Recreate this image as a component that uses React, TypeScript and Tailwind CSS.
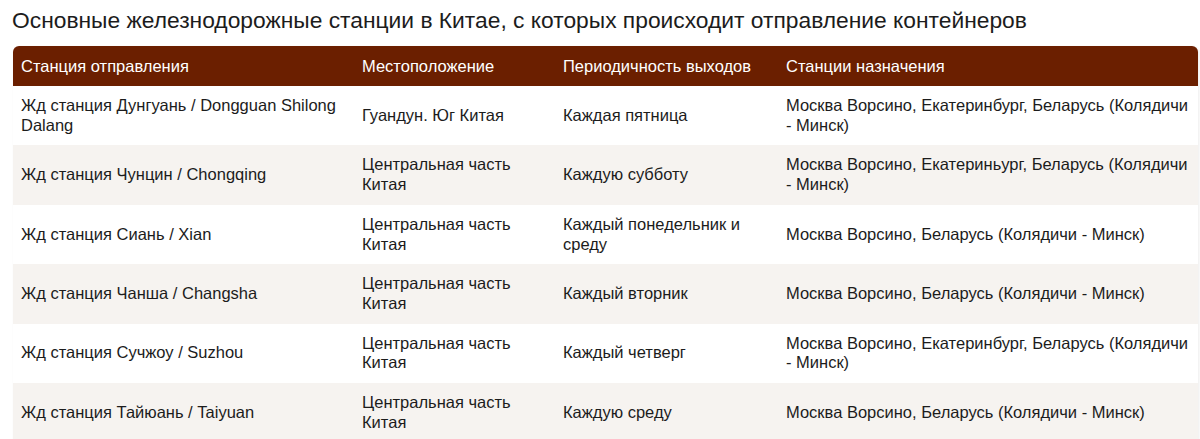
const rows = [
  {
    station: "Жд станция Дунгуань / Dongguan Shilong Dalang",
    location: "Гуандун. Юг Китая",
    frequency: "Каждая пятница",
    destinations: "Москва Ворсино, Екатеринбург, Беларусь (Колядичи - Минск)",
  },
  {
    station: "Жд станция Чунцин / Chongqing",
    location: "Центральная часть Китая",
    frequency: "Каждую субботу",
    destinations: "Москва Ворсино, Екатериньург, Беларусь (Колядичи - Минск)",
  },
  {
    station: "Жд станция Сиань / Xian",
    location: "Центральная часть Китая",
    frequency: "Каждый понедельник и среду",
    destinations: "Москва Ворсино, Беларусь (Колядичи - Минск)",
  },
  {
    station: "Жд станция Чанша / Changsha",
    location: "Центральная часть Китая",
    frequency: "Каждый вторник",
    destinations: "Москва Ворсино, Беларусь (Колядичи - Минск)",
  },
  {
    station: "Жд станция Сучжоу / Suzhou",
    location: "Центральная часть Китая",
    frequency: "Каждый четверг",
    destinations: "Москва Ворсино, Екатеринбург, Беларусь (Колядичи - Минск)",
  },
  {
    station: "Жд станция Тайюань / Taiyuan",
    location: "Центральная часть Китая",
    frequency: "Каждую среду",
    destinations: "Москва Ворсино, Беларусь (Колядичи - Минск)",
  },
];

export default function App() {
  return (
    <div className="min-h-screen bg-white pl-[13px] pr-[2px] pt-[6px] text-[#1c1c1c] [font-family:Arial,'Liberation_Sans',sans-serif]">
      <h2 className="mb-[11px] text-[22.8px] leading-[29px] font-normal -ml-[1px]">
        Основные железнодорожные станции в Китае, с которых происходит отправление контейнеров
      </h2>
      <div className="overflow-hidden rounded-t-[6px] shadow-[1px_1px_3px_rgba(0,0,0,0.08)]">
        <table className="w-full table-fixed border-collapse text-[16.5px]">
          <colgroup>
            <col className="w-[340px]" />
            <col className="w-[201px]" />
            <col className="w-[223px]" />
            <col />
          </colgroup>
          <thead>
            <tr className="bg-[#6b1f00] text-white">
              <th className="h-[40px] px-[8px] text-left font-normal">Станция отправления</th>
              <th className="px-[9px] text-left font-normal">Местоположение</th>
              <th className="px-[9px] text-left font-normal">Периодичность выходов</th>
              <th className="px-[9px] text-left font-normal">Станции назначения</th>
            </tr>
          </thead>
          <tbody>
            {rows.map((row, i) => (
              <tr key={row.station} className={i % 2 === 1 ? "bg-[#f6f3f0]" : "bg-white"}>
                <td className="px-[8px] py-[10px] leading-[19.7px]">{row.station}</td>
                <td className="px-[9px] py-[10px] leading-[19.7px]">{row.location}</td>
                <td className="px-[9px] py-[10px] leading-[19.7px]">{row.frequency}</td>
                <td className="px-[9px] py-[10px] leading-[19.7px]">{row.destinations}</td>
              </tr>
            ))}
          </tbody>
        </table>
      </div>
    </div>
  );
}
